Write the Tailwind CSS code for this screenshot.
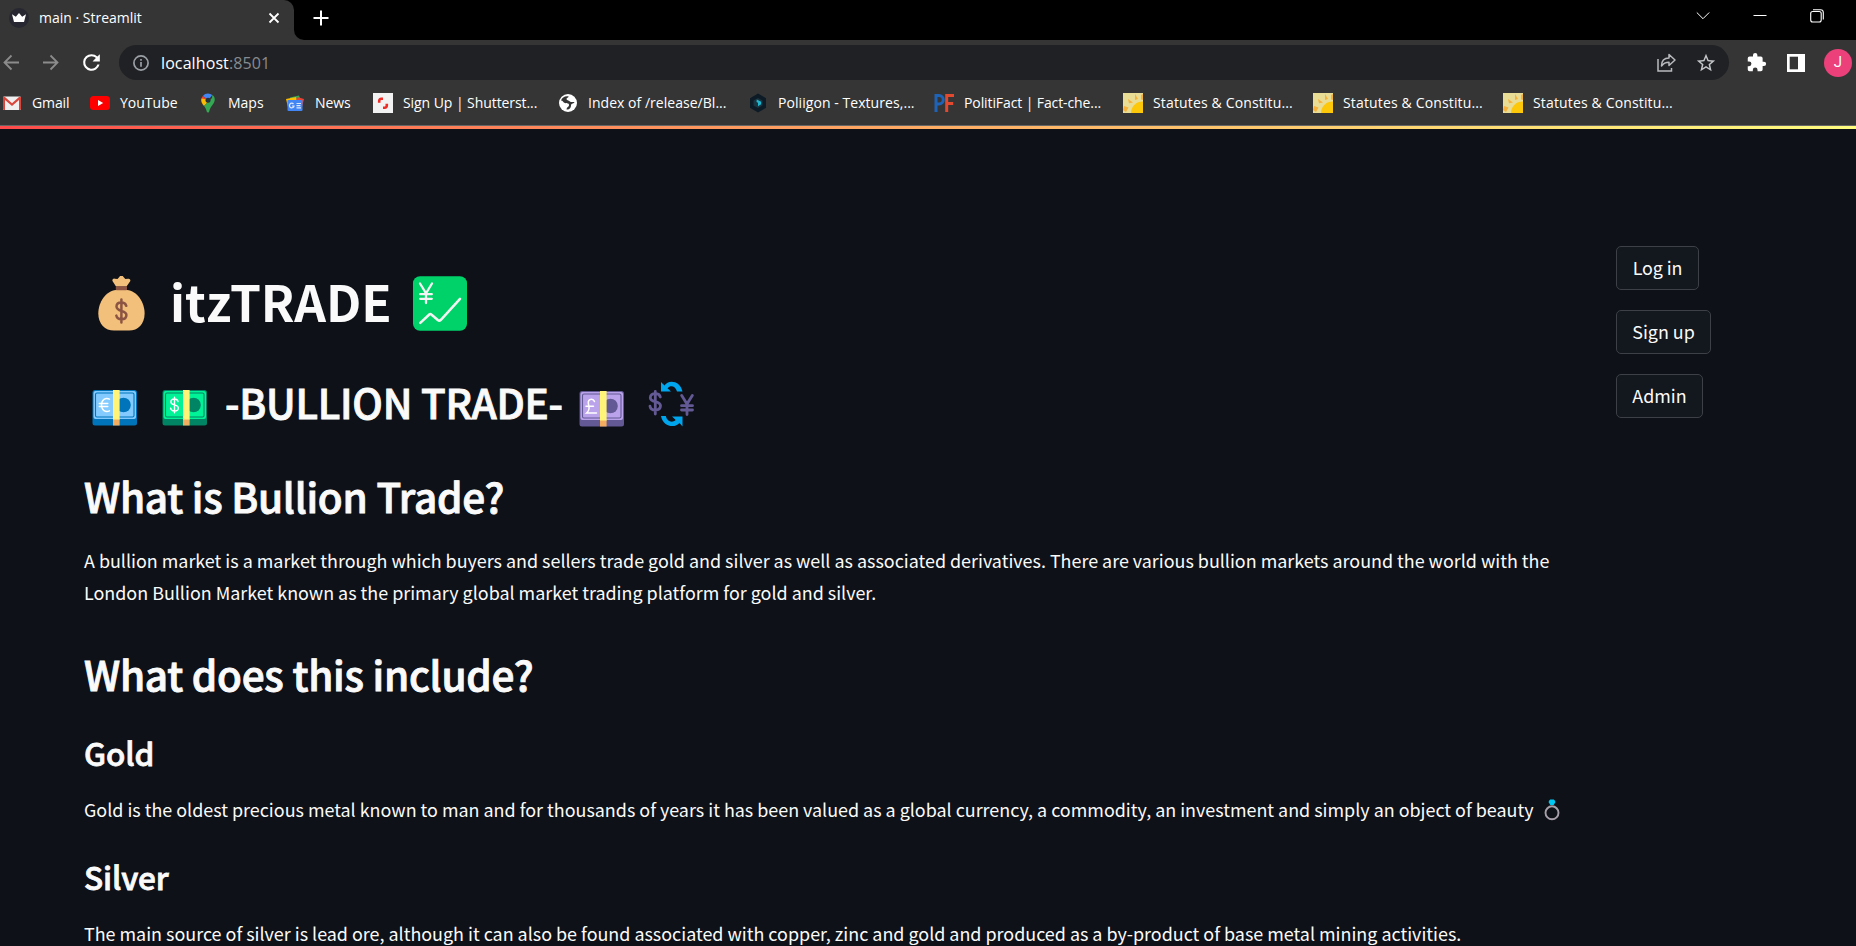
<!DOCTYPE html>
<html lang="en">
<head>
<meta charset="utf-8">
<title>main · Streamlit</title>
<script src="https://cdn.jsdelivr.net/npm/@tailwindcss/browser@4"></script>
</head>
<body class="h-[946px] w-[1856px] overflow-hidden bg-[#0e1117] font-['Noto_Sans_CJK_SC','Noto_Sans',sans-serif] text-[#fafafa]">

<!-- Shared symbols -->
<svg class="hidden">
  <symbol id="sun" viewBox="0 0 20 20">
    <rect width="20" height="20" fill="#e9dc95"/>
    <path d="M20 8.500A11.500 11.500 0 0 0 8 20H20Z" fill="#fdc70a"/>
    <path d="M5 6l5 3.500-4 .8zM1 13l4.500 1.500L3 19l-3-2zM12 1l3 5-3 1zM18 2l2-1v6l-2-.5z" fill="#f7b23c"/>
  </symbol>
</svg>

<header class="font-['Open_Sans','Noto_Sans',sans-serif]">
  <!-- Tab strip -->
  <div class="flex h-10 bg-black">
    <div class="flex h-10 w-[294px] items-center rounded-tr-[10px] bg-[#353535] pr-[14px] pb-1 pl-[9px]">
      <svg class="size-5" viewBox="0 0 20 20"><circle cx="10" cy="10" r="10" fill="#262730"/><path d="M3 6.200l3.800 2.600L10 5l3.200 3.800L17 6.200 15 14H5z" fill="#fff"/></svg>
      <span class="ml-[10px] flex-1 text-sm leading-5 text-white">main · Streamlit</span>
      <svg class="size-3" viewBox="0 0 12 12" stroke="#fff" stroke-width="1.800"><path d="M1.500 1.500l9 9M10.500 1.500l-9 9"/></svg>
    </div>
    <svg class="size-[10px] self-end" viewBox="0 0 10 10"><path d="M0 0A10 10 0 0 0 10 10H0z" fill="#353535"/></svg>
    <svg class="mt-[10px] ml-[9px] size-4" viewBox="0 0 16 16" stroke="#fff" stroke-width="2"><path d="M8 .5v15M.5 8h15"/></svg>
    <div class="ml-auto flex gap-[43px] pt-[9px] pr-[32px]">
      <svg class="size-[14px]" viewBox="0 0 14 14" fill="none" stroke="#fff" stroke-width="1"><path d="M.8 3.500L7 9.700l6.200-6.200"/></svg>
      <svg class="size-[14px]" viewBox="0 0 14 14" stroke="#fff" stroke-width="1"><path d="M.5 6.500h13"/></svg>
      <svg class="size-[14px]" viewBox="0 0 14 14" fill="none" stroke="#fff" stroke-width="1.100"><rect x=".7" y="2.500" width="10.500" height="10.500" rx="2"/><path d="M3 .7h7.500a2.800 2.800 0 0 1 2.800 2.800v7"/></svg>
    </div>
  </div>

  <!-- Address bar -->
  <div class="flex h-[45px] items-center bg-[#353535] pr-1 pl-[3px]">
    <svg class="size-[17px]" viewBox="0 0 17 17" fill="none" stroke="#8b8b8b" stroke-width="1.800"><path d="M16 8.500H1.800M8.500 1.500l-7 7 7 7"/></svg>
    <svg class="ml-[22px] size-[17px]" viewBox="0 0 17 17" fill="none" stroke="#8b8b8b" stroke-width="1.800"><path d="M1 8.500h14.200M8.500 1.500l7 7-7 7"/></svg>
    <svg class="ml-[20px] size-[25px]" viewBox="0 0 24 24" fill="#fff"><path d="M17.650 6.350A7.960 7.960 0 0 0 12 4a8 8 0 1 0 7.730 10h-2.080A6 6 0 1 1 12 6c1.660 0 3.140.69 4.220 1.780L13 11h7V4l-2.350 2.350z"/></svg>
    <div class="ml-[15px] flex h-[35px] w-[1610px] items-center rounded-full bg-[#202124] pr-[12px] pl-[14px]">
      <svg class="size-4" viewBox="0 0 16 16" fill="none" stroke="#9aa0a6" stroke-width="1.700"><circle cx="8" cy="8" r="7.100"/><path d="M8 7v4.800M8 4v1.800"/></svg>
      <span class="ml-3 flex-1 text-base leading-6 tracking-[0.1px] text-white">localhost<span class="text-[#878b90]">:8501</span></span>
      <svg class="size-[19px]" viewBox="0 0 19 19" fill="none" stroke="#b8babd" stroke-width="1.500"><path d="M1 6v12h13.500v-3"/><path d="M4.500 13c0-5.500 3-8 7.500-8V1.500l6 5.500-6 5.500V9.200c-3.500 0-5.500 1-7.500 3.800z" stroke-linejoin="round"/></svg>
      <svg class="ml-[19px] size-[22px]" viewBox="0 0 24 24" fill="#c4c7c9"><path d="M22 9.240l-7.190-.62L12 2 9.190 8.630 2 9.240l5.460 4.730L5.820 21 12 17.270 18.180 21l-1.630-7.030L22 9.240zM12 15.400l-3.760 2.270 1-4.280-3.320-2.880 4.380-.38L12 6.100l1.710 4.040 4.380.38-3.320 2.880 1 4.280L12 15.400z"/></svg>
    </div>
    <svg class="ml-[17px] size-[21px]" viewBox="0 0 24 24" fill="#fff"><path d="M20.500 11H19V7a2 2 0 0 0-2-2h-4V3.500a2.500 2.500 0 0 0-5 0V5H4a2 2 0 0 0-2 2v3.800h1.500a2.700 2.700 0 0 1 0 5.400H2V20a2 2 0 0 0 2 2h3.800v-1.500a2.700 2.700 0 0 1 5.400 0V22H17a2 2 0 0 0 2-2v-4h1.500a2.500 2.500 0 0 0 0-5z"/></svg>
    <svg class="ml-[20px] size-[18px]" viewBox="0 0 18 18"><rect width="18" height="18" fill="#fff"/><rect x="2.700" y="2.700" width="8.300" height="12.600" fill="#353535"/></svg>
    <div class="ml-auto flex size-7 items-center justify-center rounded-full bg-[#ec407a] font-[Roboto] text-[15px] text-white">J</div>
  </div>

  <!-- Bookmarks -->
  <nav class="flex h-[41px] items-center border-b border-[#656565] bg-[#353535] pb-1 pl-0.5 text-sm leading-5 whitespace-nowrap text-white">
    <div class="flex w-[88px] items-center gap-[10px]"><svg class="size-5" viewBox="0 0 20 20"><rect x="1" y="3.500" width="18" height="13.500" rx="1.200" fill="#efefef"/><path d="M1 15.800V4.700A1.200 1.200 0 0 1 3 4l7 6.200L17 4a1.200 1.200 0 0 1 2 .7v11.100a1.200 1.200 0 0 1-1.200 1.200H17V7l-7 6-7-6v10h-.8A1.200 1.200 0 0 1 1 15.800z" fill="#d9453a"/></svg><span class="tracking-[-0.1px]">Gmail</span></div>
    <div class="flex w-[108px] items-center gap-[10px]"><svg class="size-5" viewBox="0 0 20 20"><rect y="3" width="20" height="14" rx="3.500" fill="#f00"/><path d="M8 7l5.200 3L8 13z" fill="#fff"/></svg><span>YouTube</span></div>
    <div class="flex w-[87px] items-center gap-[10px]"><svg class="size-5" viewBox="0 0 20 20"><path d="M10 .5a6.700 6.700 0 0 0-5.200 2.400L10 7.300l4.300-5.200A6.700 6.700 0 0 0 10 .5z" fill="#4285f4"/><path d="M4.800 2.900A6.600 6.600 0 0 0 4 10l6-3z" fill="#ea4335"/><path d="M3.500 5.500c-.6 3 .4 5 2.500 7.500L12 7z" fill="#fbbc04"/><path d="M14.300 2.100c3.300 2 3 6 .7 9.200-2 2.700-3.200 4.200-3.800 7.200-.2 1.300-2.200 1.300-2.500 0C8.300 16.500 7.500 14.800 6 13l8-8z" fill="#34a853"/><circle cx="10" cy="7.200" r="2.500" fill="#263238"/></svg><span>Maps</span></div>
    <div class="flex w-[88px] items-center gap-[10px]"><svg class="size-5" viewBox="0 0 20 20"><path d="M5 4.500l9-2 2 6H5z" fill="#34a853"/><path d="M1 6l10-2 2 8-10 2z" fill="#fbbc04"/><path d="M12 4l7 2-2 8-7-2z" fill="#ea4335"/><rect x="2.500" y="7" width="15" height="11" rx="1" fill="#4285f4"/><path d="M8.500 11A2.300 2.300 0 1 0 9 13H7M11.500 10.500h4.500M11.500 12.700h4M11.500 14.800h4.500" fill="none" stroke="#dbe8ff" stroke-width="1.200"/></svg><span class="tracking-[-0.1px]">News</span></div>
    <div class="flex w-[185px] items-center gap-[10px]"><svg class="size-5" viewBox="0 0 20 20"><rect width="20" height="20" fill="#f2f2f2"/><path d="M10 5.700H8.300A2.200 2.200 0 0 0 6.200 8v1.800M10 14.800h1.700a2.200 2.200 0 0 0 2.100-2.300v-1.800" fill="none" stroke="#ee2b24" stroke-width="2.600"/></svg><span class="tracking-[-0.07px]">Sign Up | Shutterst...</span></div>
    <div class="flex w-[190px] items-center gap-[10px]"><svg class="size-5" viewBox="0 0 20 20"><circle cx="10" cy="10" r="9" fill="#fff"/><path d="M3 7.500c2 0 2 2 4 2.500s4 0 4 2-2 1.500-2.500 4.500c3 .5 4.500-2 4.500-4s2-1.500 3.500-3c-1-1.500-3 .5-4.500-1s-3.500-1-3.500-2.500 2-1 2.200-2.500C7 2.800 4 4.500 3 7.500z" fill="#353535"/></svg><span class="tracking-[0.03px]">Index of /release/Bl...</span></div>
    <div class="flex w-[186px] items-center gap-[10px]"><svg class="size-5" viewBox="0 0 20 20"><path d="M10 .5l8 4.700v9.600l-8 4.700-8-4.700V5.200z" fill="#0d1b27"/><path d="M10 5l4.500 2.600v5L10 15l-4.500-2.400v-5z" fill="#1b3540"/><path d="M8.800 6.500l4.300 2.300v2.500L10 13.300V9.800L8.500 9z" fill="#1fb5cf"/></svg><span class="tracking-[0.06px]">Poliigon - Textures,...</span></div>
    <div class="flex w-[189px] items-center gap-[10px]"><svg class="size-5" viewBox="0 0 20 20" fill="none" stroke-width="3"><path d="M2 19V2.500h3a4.200 4.200 0 0 1 0 8.500H2" stroke="#1e63b5"/><path d="M12.700 19V2.500H20M12.700 10.500h6.500" stroke="#e2492f"/></svg><span class="tracking-[-0.1px]">PolitiFact | Fact-che...</span></div>
    <div class="flex w-[190px] items-center gap-[10px]"><svg class="size-5"><use href="#sun"/></svg><span class="tracking-[0.15px]">Statutes &amp; Constitu...</span></div>
    <div class="flex w-[190px] items-center gap-[10px]"><svg class="size-5"><use href="#sun"/></svg><span class="tracking-[0.15px]">Statutes &amp; Constitu...</span></div>
    <div class="flex w-[190px] items-center gap-[10px]"><svg class="size-5"><use href="#sun"/></svg><span class="tracking-[0.15px]">Statutes &amp; Constitu...</span></div>
  </nav>
  <div class="h-[3px] bg-linear-to-r from-[#ff4b4b] to-[#fffd80]"></div>
</header>

<main class="flex pl-[84px]">
  <section class="w-[1532px] shrink-0 pt-[139px]">
    <h1 class="flex h-[66px] items-start pl-[14px] text-[49.500px] leading-[66px] font-bold whitespace-nowrap">
      <svg class="mt-2 h-[55px] w-[47px]" viewBox="0 0 47 55">
        <path d="M18 10.500L14.800 5.500a1.800 1.800 0 0 1 2-2.800l2.700.3 2-2.300a2.200 2.200 0 0 1 3.800 0L27.300 3l2.900-.3a1.800 1.800 0 0 1 1.800 2.800l-3.500 5z" fill="#f3c07b"/>
        <path d="M18 14C8 15 .3 26 .3 37.500.3 48 7 54.600 16 54.600h15c9 0 15.600-6.600 15.600-17.100C46.600 26 39 15 29 14z" fill="#f3c07b"/>
        <rect x="17.800" y="10.300" width="11.200" height="4" rx=".8" fill="#8c5543"/>
        <path d="M28.300 29.800c-.7-2.200-2.500-3.300-4.900-3.300-2.900 0-4.900 1.500-4.900 4 0 5.800 9.900 3.200 9.900 8.500 0 2.700-2 4.300-5 4.300-2.700 0-4.600-1.300-5.100-3.700M23.400 23.500v23" fill="none" stroke="#8c5543" stroke-width="2.500" stroke-linecap="round"/>
      </svg>
      <span class="ml-[25px] w-[243px]">itzTRADE</span>
      <svg class="mt-2 h-[55px] w-[54px]" viewBox="0 0 54 55">
        <rect y=".3" width="54" height="54.400" rx="7" fill="#00d26a"/>
        <path d="M7 7.500l6 9.800 6-9.800M13 17.300V27M7.200 18.200h11.600M7.200 22.800h11.600" fill="none" stroke="#f4f4f4" stroke-width="2.300" stroke-linecap="round"/>
        <path d="M7.300 46.800l9-8.300q1-.9 2 0l6.500 5.500q1.500 1.200 2.900 0L47 22.800" fill="none" stroke="#f4f4f4" stroke-width="2.500" stroke-linecap="round"/>
      </svg>
    </h1>

    <h2 class="mt-[41px] flex h-[54px] items-start pl-[8px] text-[40.500px] leading-[54px] font-medium whitespace-nowrap">
      <svg class="mt-[15px] h-9 w-[45px]" viewBox="0 0 45 36">
        <rect x=".5" width="44.500" height="35.500" rx="2.500" fill="#0074ba"/><rect x="1.500" y="1" width="42.500" height="28" rx="2" fill="#83cbff"/>
        <rect x="3.500" y="3" width="38.500" height="24" rx="1.500" fill="none" stroke="#0074ba" stroke-width="1.100"/>
        <circle cx="31.500" cy="15" r="7.300" fill="#0074ba"/><rect x="21" width="6.600" height="30" fill="#fff478"/><rect x="21" y="29.500" width="6.600" height="6" fill="#f3ad61"/>
        <path d="M17.500 9.200c-4-2-8 .7-8 5.800s4 7.800 8 5.800M7.300 13.500h8.500M7.300 16.500h8.500" fill="none" stroke="#fff" stroke-width="1.400" stroke-linecap="round"/>
      </svg>
      <svg class="mt-[15px] ml-[25px] h-9 w-[45px]" viewBox="0 0 45 36">
        <rect x=".5" width="44.500" height="35.500" rx="2.500" fill="#008463"/><rect x="1.500" y="1" width="42.500" height="28" rx="2" fill="#00f397"/>
        <rect x="3.500" y="3" width="38.500" height="24" rx="1.500" fill="none" stroke="#008463" stroke-width="1.100"/>
        <circle cx="31.500" cy="15" r="7.300" fill="#008463"/><rect x="21" width="6.600" height="30" fill="#fff478"/><rect x="21" y="29.500" width="6.600" height="6" fill="#f3ad61"/>
        <path d="M16 11.600c-.3-1.700-1.600-2.600-3.600-2.600-2.200 0-3.500 1.100-3.500 2.900 0 4 7.400 2 7.400 6 0 2-1.600 3.100-3.800 3.100-2.100 0-3.600-1-3.900-2.900M12.500 7.300v15.400" fill="none" stroke="#fff" stroke-width="1.400" stroke-linecap="round"/>
      </svg>
      <span class="ml-[18px] w-[354px] tracking-[-0.25px] [-webkit-text-stroke:0.9px_#fafafa]">-BULLION TRADE-</span>
      <svg class="mt-4 h-9 w-[45px]" viewBox="0 0 45 36">
        <rect x=".5" width="44.500" height="35.500" rx="2.500" fill="#635994"/><rect x="1.500" y="1" width="42.500" height="28" rx="2" fill="#bba3eb"/>
        <rect x="3.500" y="3" width="38.500" height="24" rx="1.500" fill="none" stroke="#635994" stroke-width="1.100"/>
        <circle cx="31.500" cy="15" r="7.300" fill="#635994"/><rect x="21" width="6.600" height="30" fill="#fff478"/><rect x="21" y="29.500" width="6.600" height="6" fill="#f3ad61"/>
        <path d="M15.500 10.500c-.6-1.700-1.800-2.300-3-2.300-2.400 0-3.700 2-3.100 4.500.9 3.800 1.400 6.500-1.800 9.300H17.500M7 15.200h7.500" fill="none" stroke="#fff" stroke-width="1.500" stroke-linecap="round"/>
      </svg>
      <svg class="mt-[6px] ml-[24px] h-[46px] w-[46px]" viewBox="0 0 46 46" fill="none">
        <path d="M12.300 16c-.5-2.200-2.300-3.300-5-3.300-3 0-5 1.400-5 4 0 5.400 10.200 2.600 10.200 8.100 0 2.700-2.200 4.200-5.200 4.200-2.900 0-4.900-1.400-5.300-3.800M7.300 10.500v22.500" stroke="#635994" stroke-width="2.800" stroke-linecap="round"/>
        <path d="M33.700 14.500l5.300 8.500 5.300-8.500M39 23v10.500M33.500 24.700h11M33.500 29h11" stroke="#635994" stroke-width="2.800" stroke-linecap="round"/>
        <path d="M34.500 10.500C32-1 20-1.500 16.500 4.500L13 1v9.500h10L19.500 7.200C22.500 3.500 27.500 5 29 10.500z" fill="#00a6ed"/>
        <path d="M13 35c2 11 14 12.500 18.500 7l3 3.500V35.500H24l3.700 3.500C24.500 42.200 19 41 17.800 35z" fill="#00a6ed"/>
      </svg>
    </h2>

    <h2 class="mt-[40px] text-[40.500px] leading-[54px] font-medium tracking-[-0.26px] [-webkit-text-stroke:0.9px_#fafafa]">What is Bullion Trade?</h2>
    <p class="mt-[21px] text-[17.910px] leading-8 whitespace-nowrap">A bullion market is a market through which buyers and sellers trade gold and silver as well as associated derivatives. There are various bullion markets around the world with the<br>London Bullion Market known as the primary global market trading platform for gold and silver.</p>

    <h2 class="mt-[39px] text-[40.500px] leading-[54px] font-medium tracking-[-0.26px] [-webkit-text-stroke:0.9px_#fafafa]">What does this include?</h2>

    <h3 class="mt-[30px] text-[31.500px] leading-[42px] font-medium tracking-[-0.15px] [-webkit-text-stroke:0.8px_#fafafa]">Gold</h3>
    <p class="mt-[20px] flex text-[17.910px] leading-8 whitespace-nowrap">Gold is the oldest precious metal known to man and for thousands of years it has been valued as a global currency, a commodity, an investment and simply an object of beauty
      <svg class="mt-[6px] ml-[10px] h-[22px] w-4" viewBox="0 0 16 22"><circle cx="8" cy="13.800" r="6.500" fill="none" stroke="#a79fa9" stroke-width="1.900"/><path d="M4.800 2L6.200.5h3.600L11.200 2v1.500L9.700 6H6.300L4.800 3.500z" fill="#00c8f5"/></svg>
    </p>

    <h3 class="mt-[30px] text-[31.500px] leading-[42px] font-medium tracking-[-0.15px] [-webkit-text-stroke:0.8px_#fafafa]">Silver</h3>
    <p class="mt-[20px] text-[17.910px] leading-8 whitespace-nowrap">The main source of silver is lead ore, although it can also be found associated with copper, zinc and gold and produced as a by-product of base metal mining activities.</p>
  </section>

  <aside class="flex flex-col items-start gap-5 pt-[117px] text-[17.900px] leading-[40px]">
    <button class="h-11 w-[83px] rounded-[5px] border border-[#3d4046] bg-[#13171e] pb-0.5 tracking-[-0.1px]">Log in</button>
    <button class="h-11 w-[95px] rounded-[5px] border border-[#3d4046] bg-[#13171e] pb-0.5">Sign up</button>
    <button class="h-11 w-[87px] rounded-[5px] border border-[#3d4046] bg-[#13171e] pb-0.5">Admin</button>
  </aside>
</main>
</body>
</html>
